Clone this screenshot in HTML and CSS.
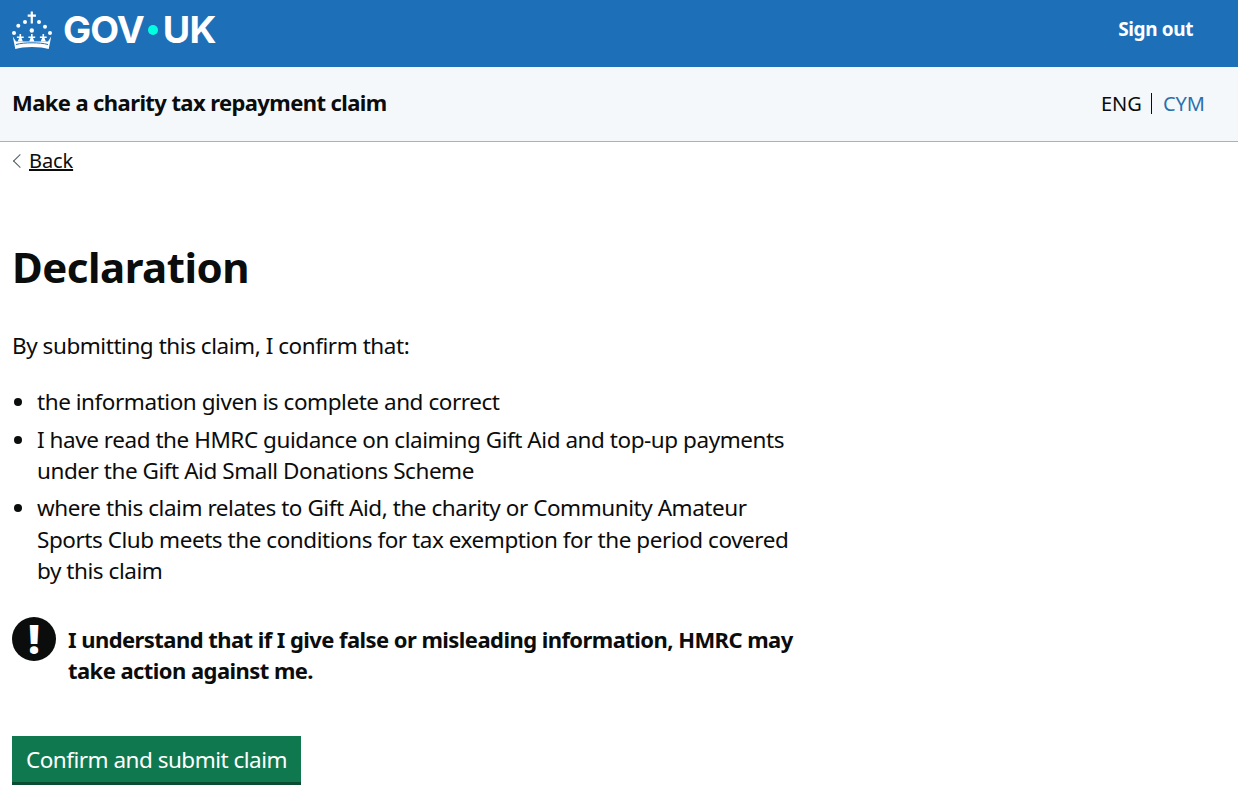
FILE: index.html
```html
<!DOCTYPE html>
<html lang="en">
<head>
<meta charset="utf-8">
<title>Declaration</title>
<link rel="stylesheet" href="styles.css">
</head>
<body>
<header class="top">
  <a class="logo" href="#">
    <svg class="crown" viewBox="0 0 40 38" width="40" height="38" aria-hidden="true">
      <g fill="#fff">
        <path d="M18.700 0.500h2.200v3h3v2.200h-3v6.800h-2.200V5.700h-3V3.500h3z"/>
        <circle cx="6.300" cy="14.700" r="2"/><circle cx="13" cy="11" r="2"/>
        <circle cx="27" cy="11" r="2"/><circle cx="33" cy="15.700" r="2"/>
        <circle cx="2" cy="22" r="2"/><circle cx="38" cy="22" r="2"/>
        <circle cx="19.800" cy="19.500" r="2.200"/>
        <path d="M19 23h1.600v2.600h2.600v1.500h-2.200l1.400 3.400h-5.200l1.400-3.400h-2.200v-1.500H19z"/>
        <path d="M7.500 23h1.600v2.600h2.600v1.500H9.500l1.400 3.400H5.700l1.400-3.400H4.900v-1.500h2.600z"/>
        <path d="M30.500 23h1.600v2.600h2.600v1.500h-2.200l1.400 3.400h-5.200l1.400-3.400h-2.200v-1.500h2.600z"/>
        <path d="M0.800 25.500l3.200 5h32l3.200-5-2.500 12.500c-4-1.300-10-2-16.700-2S7.300 36.700 3.300 38z"/>
      </g>
      <path d="M4 33.500c4.500-1.200 10-1.700 16-1.700s11.500.5 16 1.700" fill="none" stroke="#1d70b8" stroke-width="1"/>
    </svg>
    <span class="wordmark">GOV<span class="dot"></span>UK</span>
  </a>
  <a class="signout" href="#">Sign out</a>
</header>
<div class="service">
  <span class="service-name">Make a charity tax repayment claim</span>
  <nav class="lang"><span class="lang-current">ENG</span><a class="lang-link" href="#">CYM</a></nav>
</div>
<main class="page">
  <a class="back" href="#">Back</a>
  <h1 class="title">Declaration</h1>
  <p class="intro">By submitting this claim, I confirm that:</p>
  <ul class="list">
    <li>the information given is complete and correct</li>
    <li>I have read the HMRC guidance on claiming Gift Aid and top-up payments under the Gift Aid Small Donations Scheme</li>
    <li>where this claim relates to Gift Aid, the charity or Community Amateur Sports Club meets the conditions for tax exemption for the period covered by this claim</li>
  </ul>
  <div class="warning">
    <span class="warning-icon">!</span>
    <strong class="warning-text">I understand that if I give false or misleading information, HMRC may take action against me.</strong>
  </div>
  <a class="button" href="#">Confirm and submit claim</a>
</main>
</body>
</html>
```
FILE: styles.css
```css
* { box-sizing: border-box; }
html, body { margin: 0; padding: 0; }
body {
  background: #fff;
  color: #0b0c0c;
  font-family: "Noto Sans", "Liberation Sans", sans-serif;
  font-size: 22.5px;
  letter-spacing: -0.45px;
  line-height: 31.25px;
  overflow: hidden;
}
a { color: inherit; }
.top {
  height: 67px;
  background: #1d70b8;
  display: flex;
  align-items: center;
  justify-content: space-between;
  padding: 0 45px 8px 12px;
}
.logo {
  display: flex;
  align-items: center;
  gap: 11px;
  color: #fff;
  text-decoration: none;
}
.crown { display: block; }
.wordmark {
  display: flex;
  align-items: center;
  font-size: 37.5px;
  line-height: 44px;
  font-weight: 700;
  font-family: "Inter", "Liberation Sans", sans-serif;
  letter-spacing: -0.9px;
}
.dot {
  width: 10px;
  height: 10px;
  border-radius: 50%;
  background: #00ffe0;
  margin: 0 5px 0 4px;
}
.signout {
  color: #fff;
  font-weight: 700;
  font-size: 19px;
  letter-spacing: -0.4px;
  text-decoration: none;
}
.service {
  height: 75px;
  background: #f4f8fb;
  border-bottom: 1px solid #8eb8dc;
  display: flex;
  align-items: center;
  justify-content: space-between;
  padding: 0 33px 2px 12px;
}
.service-name { font-weight: 700; font-size: 22px; letter-spacing: -0.6px; }
.lang { display: flex; align-items: center; font-size: 20px; line-height: 21px; letter-spacing: 0; }
.lang-current { padding-right: 9px; border-right: 1px solid #0b0c0c; }
.lang-link { padding-left: 11px; color: #2b70ad; text-decoration: none; }
.page { width: 800px; padding-left: 12px; }
.back {
  display: inline-block;
  position: relative;
  margin-top: 7px;
  margin-left: 17px;
  font-size: 20px;
  letter-spacing: -0.1px;
  line-height: 24px;
}
.back::before {
  content: "";
  position: absolute;
  left: -14px;
  top: 7px;
  width: 9px;
  height: 9px;
  border-left: 1px solid #505a5f;
  border-bottom: 1px solid #505a5f;
  transform: rotate(45deg);
}
.title {
  margin: 65px 0 0;
  font-size: 42px;
  letter-spacing: -0.5px;
  line-height: 54px;
  font-weight: 700;
}
.intro { margin: 36px 0 0; }
.list { margin: 24.5px 0 0; padding-left: 25px; }
.list li { margin-bottom: 6.25px; }
.warning {
  display: flex;
  gap: 12px;
  margin-top: 30.5px;
  align-items: flex-start;
}
.warning-icon {
  flex: none;
  width: 44px;
  height: 44px;
  border-radius: 50%;
  background: #0b0c0c;
  color: #fff;
  font-size: 40px;
  line-height: 44px;
  font-weight: 900;
  text-align: center;
  letter-spacing: 0;
}
.warning-text { font-weight: 700; padding-top: 7px; letter-spacing: -0.56px; font-size: 22px; }
.button {
  display: inline-block;
  margin-top: 50px;
  padding: 8px 14px 7px;
  background: #10784f;
  color: #fff;
  letter-spacing: -0.5px;
  text-decoration: none;
  border-bottom: 3px solid #0b4d33;
}
```
